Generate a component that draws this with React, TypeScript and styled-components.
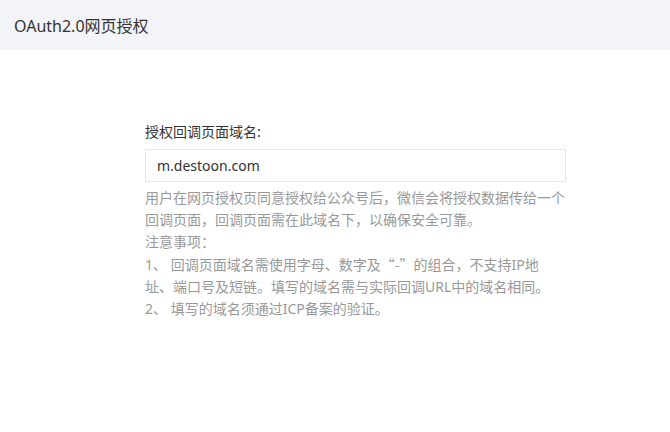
import React from 'react';
import styled, { createGlobalStyle } from 'styled-components';

const GlobalStyle = createGlobalStyle`
  html, body {
    margin: 0;
    padding: 0;
    background: #ffffff;
    font-family: "Noto Sans", "Noto Sans CJK SC", sans-serif;
  }
`;

export const Header = styled.div`
  height: 50px;
  background: #f3f4f8;
  display: flex;
  align-items: center;
  padding-left: 14px;
  font-size: 16px;
  color: #333333;
`;

export const Main = styled.div`
  padding: 72px 0 0 145px;
`;

export const Form = styled.div`
  width: 421px;
`;

export const Label = styled.div`
  font-size: 14px;
  line-height: 20px;
  color: #333333;
  margin-bottom: 7px;
`;

export const DomainInput = styled.input`
  box-sizing: border-box;
  display: block;
  width: 421px;
  height: 33px;
  padding: 0 11px;
  border: 1px solid #e5e5e5;
  outline: none;
  font-family: "Noto Sans", "Noto Sans CJK SC", sans-serif;
  font-size: 14px;
  color: #333333;
  background: #ffffff;
`;

export const Help = styled.div`
  margin-top: 5px;
  width: 421px;
  font-size: 14px;
  line-height: 22px;
  color: #999999;
`;

export const HelpLine = styled.div`
  white-space: pre-wrap;
`;

// full-width quotes, as the CJK face draws them
export const Quote = styled.span`
  font-family: "Noto Sans CJK SC", sans-serif;
`;

const App = () => {
  return (
    <>
      <GlobalStyle />
      <Header>OAuth2.0网页授权</Header>
      <Main>
        <Form>
          <Label>授权回调页面域名:</Label>
          <DomainInput defaultValue="m.destoon.com" />
          <Help>
            <HelpLine>用户在网页授权页同意授权给公众号后，微信会将授权数据传给一个回调页面，回调页面需在此域名下，以确保安全可靠。</HelpLine>
            <HelpLine>注意事项：</HelpLine>
            <HelpLine>
              1、 回调页面域名需使用字母、数字及<Quote>“-”</Quote>的组合，不支持IP地址、端口号及短链。填写的域名需与实际回调URL中的域名相同。
            </HelpLine>
            <HelpLine>2、 填写的域名须通过ICP备案的验证。</HelpLine>
          </Help>
        </Form>
      </Main>
    </>
  );
};

export default App;
